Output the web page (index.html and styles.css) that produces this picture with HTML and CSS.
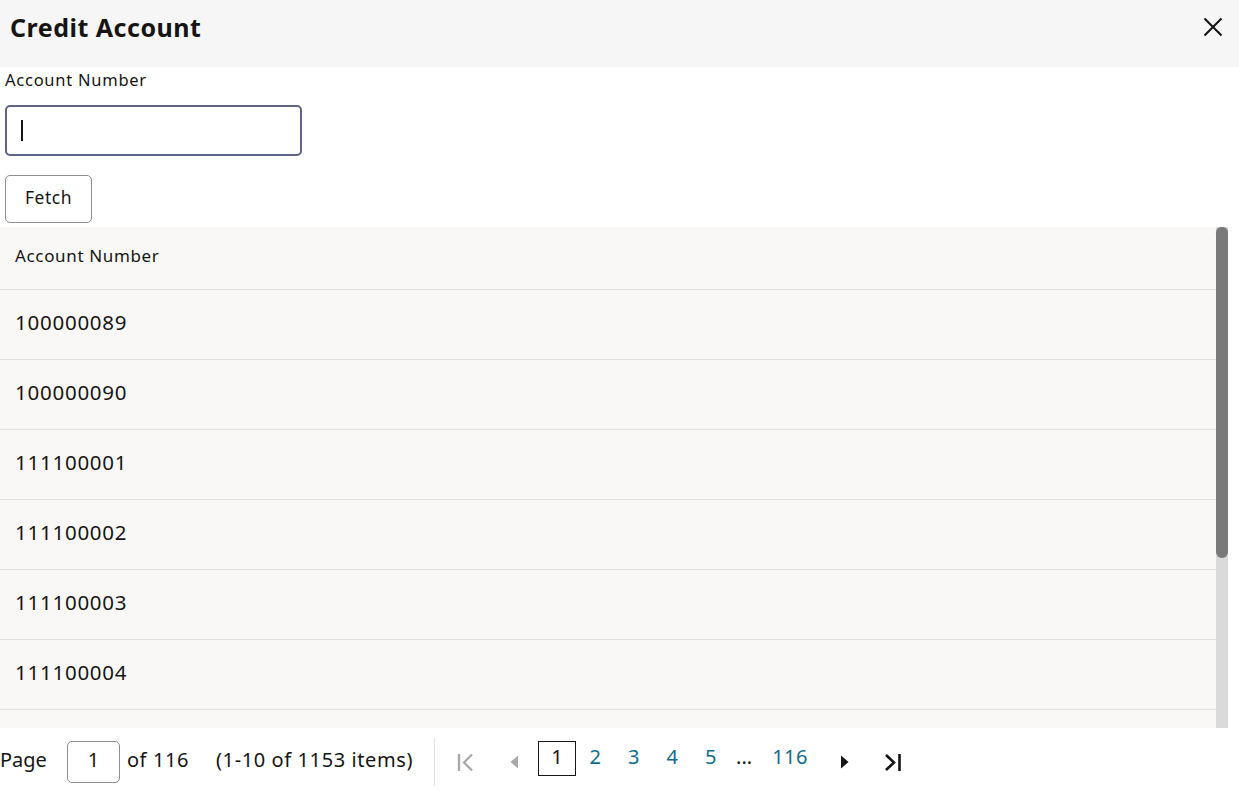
FILE: index.html
```html
<!DOCTYPE html>
<html>
<head>
<meta charset="utf-8">
<link rel="stylesheet" href="styles.css">
</head>
<body>
<div class="dialog">
  <header class="dlg-head">
    <h1 class="dlg-title">Credit Account</h1>
    <button class="close" aria-label="Close">
      <svg width="20" height="20" viewBox="0 0 20 20"><path d="M1.5 1.5 L18.5 18.5 M18.5 1.5 L1.5 18.5" stroke="#161513" stroke-width="2.1" fill="none"/></svg>
    </button>
  </header>
  <section class="form">
    <label class="lbl">Account Number</label>
    <div class="input"><span class="caret"></span></div>
    <button class="fetch">Fetch</button>
  </section>
  <div class="table-area">
    <div class="table">
      <div class="row head">Account Number</div>
      <div class="row">100000089</div>
      <div class="row">100000090</div>
      <div class="row">111100001</div>
      <div class="row">111100002</div>
      <div class="row">111100003</div>
      <div class="row">111100004</div>
      <div class="row partial"></div>
    </div>
    <div class="scrollbar"><div class="thumb"></div></div>
  </div>
  <footer class="pager">
    <span class="pg-txt pg-lbl">Page</span>
    <span class="pg-input"><span class="pg-val">1</span></span>
    <span class="pg-txt pg-of">of 116</span>
    <span class="pg-txt pg-items">(1-10 of 1153 items)</span>
    <span class="pg-sep"></span>
    <div class="pg-nav">
      <span class="nav first"><svg width="17" height="20" viewBox="0 0 17 20"><path d="M2 2 V19" stroke="#a8a8a8" stroke-width="2.4"/><path d="M15 2.5 L7 10.5 L15 18.5" stroke="#a8a8a8" stroke-width="2.2" fill="none"/></svg></span>
      <span class="nav prev"><svg width="9" height="14" viewBox="0 0 9 14"><path d="M8 0.5 L0.5 7 L8 13.5 Z" fill="#a8a8a8"/></svg></span>
      <span class="pnum current">1</span>
      <span class="pnum link">2</span>
      <span class="pnum link">3</span>
      <span class="pnum link">4</span>
      <span class="pnum link">5</span>
      <span class="pnum dots">...</span>
      <span class="pnum link wide">116</span>
      <span class="nav next"><svg width="9" height="14" viewBox="0 0 9 14"><path d="M1 0.5 L8.5 7 L1 13.5 Z" fill="#161513"/></svg></span>
      <span class="nav last"><svg width="19" height="20" viewBox="0 0 19 20"><path d="M3 3 L11 10.5 L3 18" stroke="#161513" stroke-width="2.6" fill="none"/><path d="M16.5 2 V19" stroke="#161513" stroke-width="2.6"/></svg></span>
    </div>
  </footer>
</div>
</body>
</html>
```
FILE: styles.css
```css
* { box-sizing: border-box; }
html, body { margin: 0; padding: 0; background: #fff; }
body {
  font-family: "Noto Sans", "Open Sans", sans-serif;
  color: #161513;
  width: 1239px;
  height: 802px;
  overflow: hidden;
}
.dialog { display: flex; flex-direction: column; height: 802px; }
.dlg-head {
  flex: none;
  height: 67px;
  background: #f6f6f6;
  display: flex;
  align-items: center;
  justify-content: space-between;
  padding: 0 16px 0 10px;
}
.dlg-title {
  margin: 0;
  font-size: 25px;
  font-weight: 700;
  margin-top: -13px;
  letter-spacing: 0.5px;
}
.close {
  border: 0; background: transparent; padding: 0; width: 20px; height: 20px;
  display: flex; margin-top: -13px;
}
.form { flex: none; padding: 0 5px; display: flex; flex-direction: column; align-items: flex-start; }
.lbl { font-size: 16.5px; line-height: 22px; margin-top: 2px; letter-spacing: 0.75px; }
.input {
  margin-top: 14px;
  width: 297px; height: 51px;
  border: 2px solid #5d6583;
  border-radius: 5px;
  display: flex; align-items: center;
  padding-left: 14px;
}
.caret { width: 2px; height: 21px; background: #161513; }
.fetch {
  margin-top: 19px;
  width: 87px; height: 48px;
  border: 1px solid #8f8e8c;
  border-radius: 5px;
  background: #fff;
  font-family: inherit;
  font-size: 17.5px;
  letter-spacing: 0.5px;
  color: #161513;
  padding: 0 0 5px;
}
.table-area {
  flex: none;
  margin-top: 4px;
  display: flex;
  width: 1228px;
  height: 501px;
}
.table {
  flex: 1;
  overflow: hidden;
  background: #f9f8f6;
  display: flex; flex-direction: column;
}
.scrollbar { width: 12px; background: #dadada; display: flex; flex-direction: column; }
.thumb { height: 331px; background: #7a7a7a; border-radius: 6px 6px 7px 7px; }
.row {
  flex: none;
  height: 70px;
  border-bottom: 1px solid #e1e0dd;
  display: flex; align-items: center;
  padding-left: 15px;
  padding-bottom: 6px;
  font-size: 20.5px;
  letter-spacing: 0.75px;
}
.row.partial { flex: 1; height: auto; border-bottom: 0; }
.row.head { height: 63px; font-size: 17px; letter-spacing: 0.65px; padding-bottom: 5px; }
.pager {
  flex: 1;
  display: flex;
  align-items: center;
  font-size: 20px;
  padding-bottom: 7px;
}
.pg-txt { line-height: 26px; margin-bottom: 4px; }
.pg-lbl { margin-right: 20px; }
.pg-input {
  width: 53px; height: 42px;
  border: 1px solid #8f8e8c;
  border-radius: 5px;
  display: flex; align-items: center; justify-content: center;
  margin-right: 7px;
}
.pg-val { line-height: 26px; margin-bottom: 3px; }
.pg-of { margin-right: 27px; letter-spacing: 0.6px; }
.pg-items { margin-right: 21px; letter-spacing: 0.6px; }
.pg-sep { width: 1px; height: 48px; background: #e4e3e0; margin-right: 22px; }
.pg-nav { display: flex; align-items: center; margin-bottom: 7px; }
.nav { display: flex; align-items: center; justify-content: center; }
.first { margin-right: 36px; margin-top: 7px; }
.prev { margin-right: 19px; margin-top: 7px; }
.pnum { height: 35px; line-height: 26px; display: flex; align-items: center; justify-content: center; width: 38.5px; padding-bottom: 3px; }
.current { border: 1px solid #161513; width: 38px; }
.link { color: #0d6d8c; }
.dots { width: 28px; }
.wide { width: 64px; letter-spacing: 0.5px; }
.next { margin-left: 18px; margin-top: 7px; }
.last { margin-left: 34px; margin-top: 7px; }
```
